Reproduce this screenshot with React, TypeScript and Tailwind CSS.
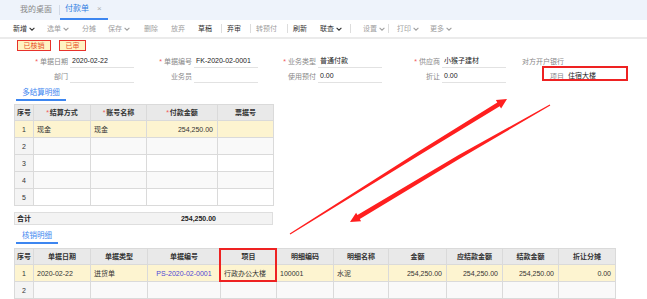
import React from "react";

type Tool = { t?: string; w: string; caret?: boolean; dark?: boolean; sep?: boolean };

const tools: Tool[] = [
  { t: "新增", w: "w-[34px]", caret: true, dark: true },
  { t: "选单", w: "w-[35px]", caret: true },
  { t: "分摊", w: "w-[26px]" },
  { t: "保存", w: "w-[36px]", caret: true },
  { t: "删除", w: "w-[27px]" },
  { t: "放弃", w: "w-[27px]" },
  { t: "草稿", w: "w-[23px]", dark: true },
  { sep: true, w: "w-[6px]" },
  { t: "弃审", w: "w-[23px]", dark: true },
  { sep: true, w: "w-[6px]" },
  { t: "转预付", w: "w-[31px]" },
  { sep: true, w: "w-[6px]" },
  { t: "刷新", w: "w-[27px]", dark: true },
  { t: "联查", w: "w-[30px]", caret: true, dark: true },
  { sep: true, w: "w-[13px]" },
  { t: "设置", w: "w-[25px]", caret: true },
  { sep: true, w: "w-[9px]" },
  { t: "打印", w: "w-[33px]", caret: true },
  { t: "更多", w: "w-[30px]", caret: true },
];

function Caret() {
  return (
    <svg width="6" height="4" viewBox="0 0 6 4" className="ml-[2px]">
      <path d="M0.6 0.8 L3 3.2 L5.4 0.8" fill="none" stroke="currentColor" strokeWidth="1.1" />
    </svg>
  );
}

type Field = { label: string; req?: boolean; value?: string; noLine?: boolean; boxed?: boolean };

const row1: Field[] = [
  { label: "单据日期", req: true, value: "2020-02-22" },
  { label: "单据编号", req: true, value: "FK-2020-02-0001" },
  { label: "业务类型", req: true, value: "普通付款" },
  { label: "供应商", req: true, value: "小猴子建材" },
  { label: "对方开户银行", noLine: true },
];
const row2: Field[] = [
  { label: "部门" },
  { label: "业务员" },
  { label: "使用预付", value: "0.00" },
  { label: "折让", value: "0.00" },
  { label: "项目", value: "住宿大楼", boxed: true, noLine: true },
];

function FormRow({ fields, top }: { fields: Field[]; top: string }) {
  return (
    <div className={`flex pl-[12px] h-[14px] ${top}`}>
      {fields.map((f, i) => (
        <div key={i} className="relative w-[124px] h-full flex items-end">
          <div className="w-[56px] h-[13px] text-right text-[#888] leading-[13px] whitespace-nowrap">
            {f.req && <span className="text-[#f25a5a] mr-[2px]">*</span>}
            {f.label}
          </div>
          <div
            className={`ml-[2px] w-[64px] h-[14px] pl-[2px] leading-[13px] text-[#222] whitespace-nowrap ${
              f.noLine ? "" : "border-b border-[#e2e2e2]"
            }`}
          >
            {f.value ?? ""}
          </div>
          {f.boxed && (
            <div className="absolute left-[34px] top-[-3px] w-[86px] h-[15px] border-2 border-[#ee2222]" />
          )}
        </div>
      ))}
    </div>
  );
}

type Col = { w: string; h: string; req?: boolean };

const t1Cols: Col[] = [
  { w: "w-[19px]", h: "序号" },
  { w: "w-[57px]", h: "结算方式", req: true },
  { w: "w-[56px]", h: "账号名称", req: true },
  { w: "w-[71px]", h: "付款金额", req: true },
  { w: "w-[56px]", h: "票据号" },
];

const t2Cols: Col[] = [
  { w: "w-[19px]", h: "序号" },
  { w: "w-[57px]", h: "单据日期" },
  { w: "w-[57px]", h: "单据类型" },
  { w: "w-[73px]", h: "单据编号" },
  { w: "w-[56px]", h: "项目" },
  { w: "w-[57px]", h: "明细编码" },
  { w: "w-[55px]", h: "明细名称" },
  { w: "w-[58px]", h: "金额" },
  { w: "w-[56px]", h: "应结款金额" },
  { w: "w-[56px]", h: "结款金额" },
  { w: "w-[57px]", h: "折让分摊" },
];

type CellSpec = { v: string; align?: "l" | "r" | "c"; color?: string };

function HeaderRow({ cols }: { cols: Col[] }) {
  return (
    <div className="flex h-[16px] bg-[#e9e9e9] border-b border-[#dadada]">
      {cols.map((c, i) => (
        <div
          key={i}
          className={`${c.w} h-full border-r border-[#dadada] flex items-center justify-center font-bold text-[#333] whitespace-nowrap`}
        >
          {c.req && <span className="text-[#f25a5a] font-normal mr-[1px]">*</span>}
          {c.h}
        </div>
      ))}
    </div>
  );
}

function DataRow({ cols, cells, idx, bg }: { cols: Col[]; cells: CellSpec[]; idx: number; bg: string }) {
  return (
    <div className={`flex h-[17px] border-b border-[#dadada] ${bg}`}>
      {cols.map((c, i) => {
        const cell = cells[i];
        const isSeq = i === 0;
        const align = cell?.align === "r" ? "justify-end pr-[4px]" : cell?.align === "c" ? "justify-center" : "justify-start pl-[3px]";
        return (
          <div
            key={i}
            className={`${c.w} h-full border-r border-[#dadada] flex items-center whitespace-nowrap ${
              isSeq ? "justify-center" : align
            } ${isSeq && idx > 1 ? "bg-[#f4f4f4] text-[#c4c4c4]" : ""} ${isSeq && idx === 1 ? "text-[#555]" : ""}`}
          >
            <span className={cell?.color ?? "text-[#333]"}>{isSeq ? String(idx) : cell?.v ?? ""}</span>
          </div>
        );
      })}
    </div>
  );
}

function SectionTab({ text, w }: { text: string; w: string }) {
  return (
    <div
      className={`ml-[16px] h-[14px] ${w} border-b-2 border-[#3d86f0] flex items-center justify-center text-[#3d86f0] text-[7.5px] whitespace-nowrap`}
    >
      {text}
    </div>
  );
}

export default function App() {
  const t1Row1: CellSpec[] = [
    { v: "1" },
    { v: "现金" },
    { v: "现金" },
    { v: "254,250.00", align: "r" },
    { v: "" },
  ];
  const t2Row1: CellSpec[] = [
    { v: "1" },
    { v: "2020-02-22" },
    { v: "进货单" },
    { v: "PS-2020-02-0001", align: "c", color: "text-[#4f47d6]" },
    { v: "行政办公大楼" },
    { v: "100001" },
    { v: "水泥" },
    { v: "254,250.00", align: "r" },
    { v: "254,250.00", align: "r" },
    { v: "254,250.00", align: "r" },
    { v: "0.00", align: "r" },
  ];

  return (
    <div className="relative w-[647px] h-[299px] overflow-hidden bg-white text-[7px] leading-none font-[family-name:'Liberation_Sans','Noto_Sans_CJK_SC',sans-serif]">
      {/* tab bar */}
      <div className="h-[20px] bg-[#eef3fb] flex items-end text-[8px]">
        <div className="ml-[20px] h-[20px] flex items-center text-[#888]">我的桌面</div>
        <div className="ml-[7px] w-px h-[10px] bg-[#d3dae6] mb-[5px]" />
        <div className="h-[20px] w-[48px] border-b-2 border-[#3d86f0] flex items-center pl-[5px] text-[#2f7de1]">
          付款单<span className="ml-[8px] text-[#b0b0b0]">×</span>
        </div>
      </div>

      {/* toolbar */}
      <div className="h-[17px] flex items-center pl-[13px] bg-white">
        {tools.map((t, i) =>
          t.sep ? (
            <div key={i} className={`${t.w} h-[9px] flex`}>
              <div className="w-px h-full bg-[#dddddd]" />
            </div>
          ) : (
            <div
              key={i}
              className={`${t.w} flex items-center whitespace-nowrap ${t.dark ? "text-[#333]" : "text-[#a0a0a0]"}`}
            >
              {t.t}
              {t.caret && <Caret />}
            </div>
          )
        )}
      </div>
      <div className="h-[2px] bg-[#ebebeb]" />

      {/* badges */}
      <div className="flex pl-[17px] pt-[1px] gap-[8px]">
        <div className="w-[34px] h-[11px] border border-[#e8322b] bg-[#fff3c2] text-[#e8502b] flex items-center justify-center">
          已核销
        </div>
        <div className="w-[27px] h-[11px] border border-[#e8322b] bg-[#fff3c2] text-[#e8502b] flex items-center justify-center">
          已审
        </div>
      </div>

      {/* form */}
      <FormRow fields={row1} top="mt-[3px]" />
      <FormRow fields={row2} top="mt-[1px]" />

      {/* section 1 */}
      <div className="mt-[4px]">
        <SectionTab text="多结算明细" w="w-[50px]" />
      </div>
      <div className="mt-[3px] ml-[14px] w-fit border-l border-t border-[#dadada]">
        <HeaderRow cols={t1Cols} />
        <DataRow cols={t1Cols} cells={t1Row1} idx={1} bg="bg-[#fdf4d0]" />
        <DataRow cols={t1Cols} cells={[]} idx={2} bg="bg-[#f9f9f9]" />
        <DataRow cols={t1Cols} cells={[]} idx={3} bg="bg-white" />
        <DataRow cols={t1Cols} cells={[]} idx={4} bg="bg-[#f9f9f9]" />
        <DataRow cols={t1Cols} cells={[]} idx={5} bg="bg-white" />
      </div>

      {/* total */}
      <div className="mt-[6px] ml-[14px] w-[259px] h-[13px] bg-[#f3f3f3] border border-[#dedede] flex items-center font-bold text-[#222]">
        <div className="w-[201px] flex items-center justify-between pl-[2px]">
          <span>合计</span>
          <span>254,250.00</span>
        </div>
      </div>

      {/* section 2 */}
      <div className="mt-[5px]">
        <SectionTab text="核销明细" w="w-[42px]" />
      </div>
      <div className="relative mt-[4px] ml-[14px] w-fit border-l border-t border-[#dadada]">
        <HeaderRow cols={t2Cols} />
        <DataRow cols={t2Cols} cells={t2Row1} idx={1} bg="bg-[#fdf4d0]" />
        <DataRow cols={t2Cols} cells={[]} idx={2} bg="bg-[#f9f9f9]" />
        <div className="absolute left-[204px] top-[-1px] w-[58px] h-[34px] border-2 border-[#ee2222]" />
      </div>

      {/* annotation arrows */}
      <svg className="absolute left-0 top-0 pointer-events-none" width="647" height="299" viewBox="0 0 647 299">
        <polygon
          fill="#ff1f1f"
          points="290.3,234.4 420,154.8 499.7,106.3 501.1,108.5 507,99 495.9,100.1 497.3,102.4 418.8,151.2 289.7,233.6"
        />
        <polygon
          fill="#ff1f1f"
          points="550.3,105.4 460,158.6 359.8,219.0 361.1,221.3 350,222 356.1,212.7 357.4,215.0 458.6,155.0 549.7,104.6"
        />
      </svg>
    </div>
  );
}
